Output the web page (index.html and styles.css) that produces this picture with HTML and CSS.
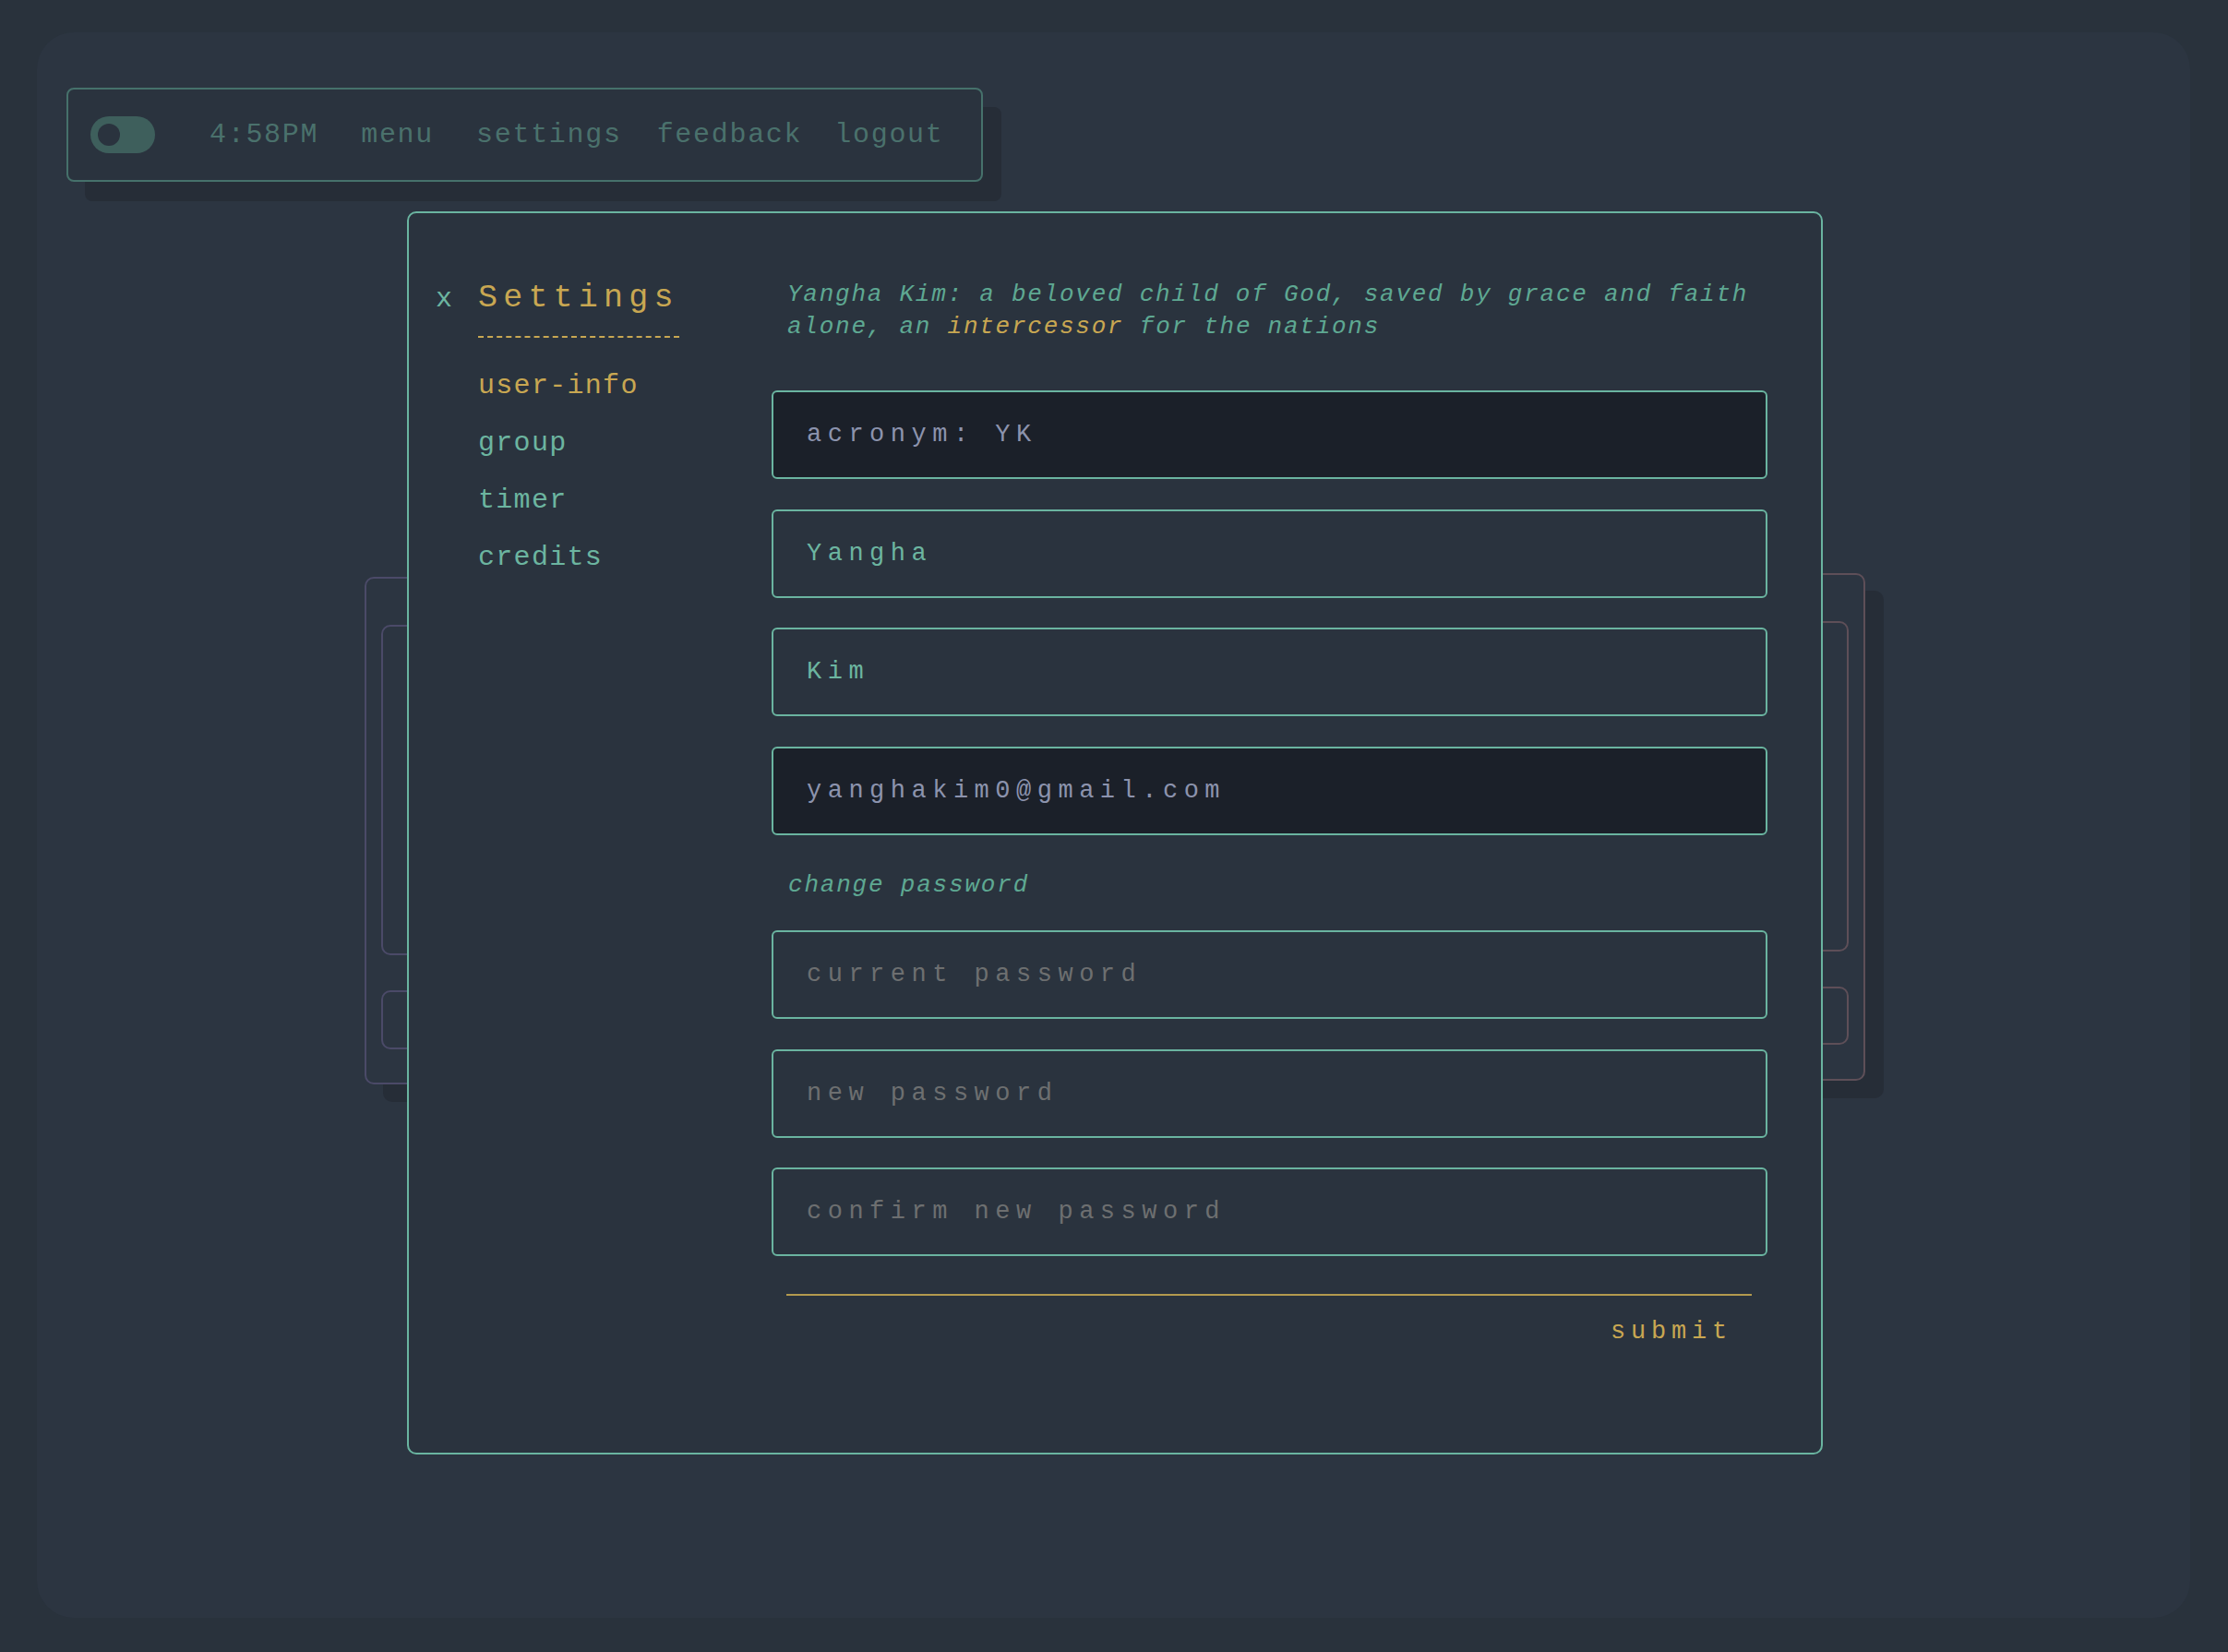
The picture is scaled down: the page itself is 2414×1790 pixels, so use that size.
FILE: index.html
```html
<!DOCTYPE html>
<html lang="en">
<head>
<meta charset="utf-8">
<title>Settings</title>
<link rel="stylesheet" href="styles.css">
</head>
<body>
<div class="screen">
  <div class="window window-left">
    <div class="pane pane-tall"></div>
    <div class="pane pane-short"></div>
  </div>
  <div class="window window-right">
    <div class="pane pane-tall"></div>
    <div class="pane pane-short"></div>
  </div>

  <nav class="toolbar">
    <span class="toggle"></span>
    <span class="clock">4:58PM</span>
    <a class="tool-link link-menu">menu</a>
    <a class="tool-link link-settings">settings</a>
    <a class="tool-link link-feedback">feedback</a>
    <a class="tool-link">logout</a>
  </nav>

  <section class="modal">
    <aside class="side">
      <div class="title-row">
        <span class="close">x</span>
        <h1 class="title">Settings</h1>
      </div>
      <ul class="side-nav">
        <li class="side-item active">user-info</li>
        <li class="side-item">group</li>
        <li class="side-item">timer</li>
        <li class="side-item">credits</li>
      </ul>
    </aside>

    <form class="content">
      <p class="bio">Yangha Kim: a beloved child of God, saved by grace and faith alone, an <span class="gold">intercessor</span> for the nations</p>
      <div class="fields">
        <input class="field field-dark" type="text" value="acronym: YK" readonly>
        <input class="field" type="text" value="Yangha">
        <input class="field" type="text" value="Kim">
        <input class="field field-dark" type="text" value="yanghakim0@gmail.com" readonly>
      </div>
      <p class="label">change password</p>
      <div class="fields">
        <input class="field" type="password" placeholder="current password">
        <input class="field" type="password" placeholder="new password">
        <input class="field" type="password" placeholder="confirm new password">
      </div>
      <hr class="rule">
      <div class="actions">
        <span class="submit">submit</span>
      </div>
    </form>
  </section>
</div>
</body>
</html>
```

FILE: styles.css
```css
* {
  box-sizing: border-box;
}

html, body {
  margin: 0;
  padding: 0;
}

body {
  width: 2414px;
  height: 1790px;
  overflow: hidden;
  background: #29323c;
  font-family: "Liberation Mono", "DejaVu Sans Mono", monospace;
  padding: 35px 41px 37px 40px;
}

.screen {
  position: relative;
  width: 2333px;
  height: 1718px;
  border-radius: 40px;
  background: #2c3541;
  padding-top: 60px;
}

/* decorative windows behind the modal */
.window {
  position: absolute;
  display: flex;
  flex-direction: column;
  gap: 38px;
  height: 550px;
  padding: 50px 16px 0;
  border: 2px solid #4b4a68;
  border-radius: 10px;
  background: #2c3541;
  box-shadow: 20px 19px 0 #262d37;
}

.window-left {
  left: 355px;
  top: 590px;
  width: 800px;
}

.window-right {
  left: 1180px;
  top: 586px;
  width: 801px;
  border-color: #5e4f58;
}

.pane {
  border: 2px solid #4b4a68;
  border-radius: 10px;
}

.window-right .pane {
  border-color: #5e4f58;
}

.pane-tall { height: 358px; }
.window-left .pane-short { height: 64px; }
.window-right .pane-short { height: 63px; }

/* toolbar */
.toolbar {
  position: relative;
  display: flex;
  align-items: center;
  width: 993px;
  height: 102px;
  margin-left: 32px;
  padding-left: 24px;
  border: 2px solid #46716b;
  border-radius: 8px;
  background: #2a333e;
  box-shadow: 20px 21px 0 #262d37;
  font-size: 30px;
  letter-spacing: 1.7px;
  color: #4a716c;
}

.toggle {
  position: relative;
  flex: none;
  width: 70px;
  height: 40px;
  border-radius: 20px;
  background: #3e5f5c;
  margin-right: 59px;
}

.toggle::after {
  content: "";
  position: absolute;
  left: 8px;
  top: 8px;
  width: 24px;
  height: 24px;
  border-radius: 50%;
  background: #2a333e;
}

.clock {
  margin-right: 46px;
}

.link-menu {
  margin-right: 46px;
}

.link-settings {
  margin-right: 38px;
}

.link-feedback {
  margin-right: 35px;
}

/* modal */
.modal {
  position: relative;
  display: grid;
  grid-template-columns: 393px 1079px;
  width: 1534px;
  height: 1347px;
  margin-left: 401px;
  margin-top: 32px;
  padding-top: 71px;
  border: 2px solid #6ab4a0;
  border-radius: 10px;
  background: #2a333e;
}

.side {
  padding-left: 29px;
}

.title-row {
  display: flex;
  align-items: baseline;
}

.close {
  width: 46px;
  font-size: 30px;
  color: #6cb5a0;
}

.title {
  margin: 0;
  font-size: 35px;
  font-weight: normal;
  line-height: 42px;
  letter-spacing: 6.2px;
  color: #c8a752;
  padding-bottom: 20px;
  border-bottom: 2px dashed #c8a752;
}

.side-nav {
  list-style: none;
  margin: 21px 0 0;
  padding: 0 0 0 46px;
}

.side-item {
  font-size: 30px;
  line-height: 62px;
  letter-spacing: 1.3px;
  color: #6cb5a0;
}

.side-item.active {
  color: #c8a752;
}

.content {
  margin: 0;
}

.bio {
  margin: 0 0 51px;
  padding-left: 17px;
  font-size: 26px;
  font-style: italic;
  line-height: 35px;
  letter-spacing: 1.75px;
  color: #5ea892;
}

.gold {
  color: #c8a752;
}

.fields {
  display: flex;
  flex-direction: column;
  gap: 32.5px;
}

.field {
  display: block;
  width: 100%;
  height: 96px;
  margin: 0;
  padding: 0 36px;
  border: 2px solid #6ab4a0;
  border-radius: 6px;
  background: #2a333e;
  font-family: "Liberation Mono", "DejaVu Sans Mono", monospace;
  font-size: 27px;
  letter-spacing: 6.5px;
  color: #6cb5a0;
  outline: none;
}

.field-dark {
  background: #1b2029;
  color: #8c93ad;
}

.field::placeholder {
  color: #6d6f70;
  opacity: 1;
}

.label {
  margin: 37px 0 31.5px;
  padding-left: 18px;
  font-size: 26px;
  font-style: italic;
  line-height: 35px;
  letter-spacing: 1.8px;
  color: #5ea892;
}

.rule {
  height: 2px;
  margin: 41px 17px 0 16px;
  border: 0;
  background: #b39a4e;
}

.actions {
  display: flex;
  justify-content: flex-end;
  margin-top: 22px;
  padding-right: 38px;
}

.submit {
  font-size: 27px;
  line-height: 35px;
  letter-spacing: 5.8px;
  color: #c8a752;
}
```
